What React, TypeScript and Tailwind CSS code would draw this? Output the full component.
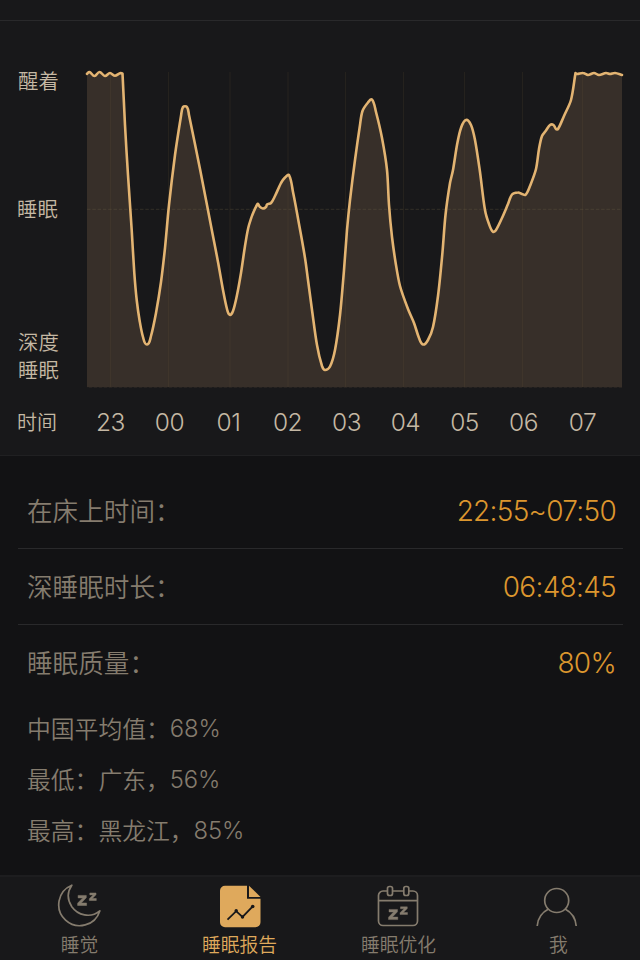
import React from 'react';
import clsx from 'clsx';

type Point = [number, number];

const HOURS = ['23', '00', '01', '02', '03', '04', '05', '06', '07'];
const GRID_X = [110.5, 168.5, 230, 288, 345.5, 403.5, 464.5, 522.5, 582.5];

// repeated points keep a corner sharp
const SLEEP_CURVE: Point[] = [
  [87, 73.8], [89.5, 72], [94.5, 76], [99.5, 72], [105, 76], [110, 73], [115, 75.8], [120, 73.2], [122.5, 73.5], [122.5, 73.5],
  [125, 125], [128, 175], [131.7, 230], [134.3, 273], [136.7, 300], [139.5, 320], [143, 337], [147, 344.5], [151, 336], [156, 313],
  [161, 282], [165, 248], [169, 205], [175, 155], [181, 116], [183, 107], [187, 107], [189, 115], [200, 169], [212, 231],
  [218, 262], [223, 290], [227, 309], [229.7, 314.8], [233, 311], [237, 295], [241, 273], [245, 246], [249, 225], [257.5, 204],
  [260, 207], [263, 208.5], [266, 207], [267, 204.5], [271, 203], [275, 196], [281, 183], [285, 177.5], [289, 175], [293, 192],
  [299, 224], [305, 258], [308, 280], [312, 310], [317, 345], [322, 366], [325, 370], [330, 366.5], [335, 350], [340, 315],
  [344, 270], [347, 230], [350, 200], [355, 160], [360, 125], [362.5, 111], [368, 102.5], [372, 99.5], [376, 112], [382, 138],
  [387, 170], [389, 205], [392, 237], [395.5, 262], [400, 286], [408, 309], [414, 323], [419, 338], [423, 344.5], [428, 340],
  [433, 327], [438, 296], [442.5, 252], [445.5, 215], [450, 183], [453, 170], [457, 145], [461, 128], [466, 120], [471, 125],
  [475, 140], [480, 172], [485, 210], [489, 224], [493, 231.8], [496, 230], [502, 218], [508, 204], [512, 194.5], [518, 192.5],
  [522, 194], [525.5, 194.8], [530, 186], [536, 169], [539, 149], [542, 136], [546, 130.5], [550, 125], [553.5, 125], [556, 129],
  [558, 129], [564, 116], [571, 100], [575.5, 73], [575.5, 73], [577, 74], [583, 73], [588, 75], [594, 73], [599, 75],
  [606, 73], [610, 74], [615, 73], [622, 75],
];

const smoothPath = (pts: Point[]) => {
  let d = `M${pts[0][0]} ${pts[0][1]}`;
  for (let i = 0; i < pts.length - 1; i++) {
    const p0 = pts[i - 1] || pts[i];
    const p1 = pts[i];
    const p2 = pts[i + 1];
    const p3 = pts[i + 2] || p2;
    // limit the handles so that uneven spacing does not overshoot
    const len = Math.hypot(p2[0] - p1[0], p2[1] - p1[1]);
    const handle = (a: Point, b: Point) => {
      const dx = b[0] - a[0];
      const dy = b[1] - a[1];
      const l = Math.hypot(dx, dy) || 1;
      return [(dx / l) * len * 0.3, (dy / l) * len * 0.3];
    };
    const h1 = handle(p0, p2);
    const h2 = handle(p1, p3);
    d += `C${(p1[0] + h1[0]).toFixed(1)} ${(p1[1] + h1[1]).toFixed(1)} ${(p2[0] - h2[0]).toFixed(1)} ${(p2[1] - h2[1]).toFixed(1)} ${p2[0]} ${p2[1]}`;
  }
  return d;
};

const SleepChart = () => {
  const line = smoothPath(SLEEP_CURVE);
  return (
    <svg width="540" height="324" viewBox="84 66 540 324" fill="none">
      <path d={`${line}V387.5H87Z`} fill="#372f29" />
      {GRID_X.map((x) => (
        <path key={x} d={`M${x} 72V387`} stroke="#6b5a35" strokeOpacity="0.16" strokeWidth="1.2" />
      ))}
      <path d="M87 209.3H622" stroke="#6f6448" strokeOpacity="0.3" strokeDasharray="3.5 1.8" />
      <path d="M87 387.5H622" stroke="#18181a" strokeOpacity="0.7" strokeDasharray="2 3" />
      <path d={line} stroke="#e3b472" strokeWidth="2.6" strokeLinejoin="round" strokeLinecap="round" />
    </svg>
  );
};

const MoonIcon = () => (
  <svg width="46" height="46" viewBox="0.7 0.3 46 46" fill="none" stroke="currentColor" strokeWidth="1.7" strokeLinejoin="round">
    <path d="M15.5 2.5A21 21 0 1 0 43.5 28.2C34 36 21.5 32.5 15.5 24C11 17 11 9 15.5 2.5Z" />
    <path d="M21.8 12.7H30V15L25 20.3H30.3V22.8H21.3V20.5L26.4 15.2H21.8ZM33.5 10.3H39.7V12L36 15.8H40V17.8H33V16.1L36.8 12.2H33.5Z" fill="currentColor" strokeWidth="0.5" />
  </svg>
);

const ReportIcon = () => (
  <svg width="46" height="46" viewBox="0 0.3 46 46" fill="none">
    <path d="M8 3H30V16H43.5V39.5A5 5 0 0 1 38.5 44.5H8A5 5 0 0 1 3 39.5V8A5 5 0 0 1 8 3Z" fill="currentColor" />
    <path d="M32 3L43.5 14.2H32Z" fill="currentColor" />
    <path d="M10.5 37L19.2 28.5L25.5 34.2L35.5 24" stroke="#18181a" strokeWidth="1.8" />
    <circle cx="19.2" cy="28" r="1.7" fill="#18181a" />
    <circle cx="25.5" cy="34.3" r="1.7" fill="#18181a" />
    <circle cx="35.7" cy="23.8" r="1.8" fill="#18181a" />
  </svg>
);

const CalendarIcon = () => (
  <svg width="46" height="46" viewBox="1 0 46 46" fill="none" stroke="currentColor" strokeWidth="1.7">
    <path d="M12.5 8H8A4.5 4.5 0 0 0 3.5 12.5V38A4.5 4.5 0 0 0 8 42.5H38A4.5 4.5 0 0 0 42.5 38V12.5A4.5 4.5 0 0 0 38 8H34M17.5 8H28.8M3.5 17.7H42.5" />
    <rect x="12.5" y="3.5" width="5" height="9" rx="2" />
    <rect x="28.8" y="3.5" width="5" height="9" rx="2" />
    <path d="M14 26.4H22.5V28.8L17.5 34H22.8V36.6H13.5V34.2L18.5 29H14ZM25.5 23.8H32.3V25.6L28.4 29.5H32.5V31.5H25V29.8L29 25.8H25.5Z" fill="currentColor" strokeWidth="0.4" />
  </svg>
);

const ProfileIcon = () => (
  <svg width="46" height="46" viewBox="2.3 0.5 46 46" fill="none" stroke="currentColor" strokeWidth="1.7">
    <circle cx="23" cy="18" r="12" />
    <path d="M14.8 26.5C8 30 4 36 3.5 43.5M31.4 26.5C38 30 42 36 42.5 43.5" />
  </svg>
);

const STATS = [
  { label: '在床上时间：', value: '22:55~07:50' },
  { label: '深睡眠时长：', value: '06:48:45' },
  { label: '睡眠质量：', value: '80%' },
];

const AVERAGES = [
  { label: '中国平均值：', value: '68%' },
  { label: '最低：广东，', value: '56%' },
  { label: '最高：黑龙江，', value: '85%' },
];

const TABS = [
  { label: '睡觉', Icon: MoonIcon },
  { label: '睡眠报告', Icon: ReportIcon, active: true },
  { label: '睡眠优化', Icon: CalendarIcon, shifted: true },
  { label: '我', Icon: ProfileIcon, shifted: true },
];

export default function App() {
  return (
    <div className="w-[640px] h-[960px] flex flex-col overflow-hidden bg-[#121214] font-['Inter','Noto_Sans_CJK_SC',sans-serif] font-light">
      <section className="h-[456px] shrink-0 bg-[#18181a] border-b border-[#202022] text-[#c5b8a4]">
        <div className="h-[21px] border-b border-[#29292b]" />
        <div className="flex pt-[45px]">
          <div className="w-[66px] ml-[18px] shrink-0 text-[20.4px] leading-[28px] font-[350]">
            <div className="mt-[2px]">醒着</div>
            <div className="mt-[100px] -ml-px">睡眠</div>
            <div className="mt-[105px]">深度<br />睡眠</div>
          </div>
          <SleepChart />
        </div>
        <div className="h-[64px] flex items-center">
          <div className="w-[63px] pt-px pl-[17px] mr-[18px] text-[20px] whitespace-nowrap font-[350]">时间</div>
          {HOURS.map((hour) => (
            <div key={hour} className="w-[59px] text-center text-[24.5px] tracking-[-0.02em]">{hour}</div>
          ))}
        </div>
      </section>

      <main className="flex-1 pt-[17px] pl-[18px] pr-[17px] text-[#857c6e]">
        {STATS.map((item, i) => (
          <div
            key={item.label}
            className={clsx('h-[76px] flex items-center justify-between pl-[9px] pr-[7px]', i < 2 && 'border-b border-[#29292b]')}
          >
            <span className={clsx('text-[25.6px] font-[350]', i < 2 ? 'pt-[4px]' : 'pt-[2px]')}>{item.label}</span>
            <span className="text-[28px] tracking-[-0.025em] text-[#dc962e]">{item.value}</span>
          </div>
        ))}
        <div className="pl-[9px] pt-[2px]">
          {AVERAGES.map((item) => (
            <div key={item.label} className="h-[51px] flex items-center text-[23.8px]">
              <span className="pt-[3px] font-[350]">{item.label}</span>
              <span className="pt-px tracking-[-0.005em]">{item.value}</span>
            </div>
          ))}
        </div>
      </main>

      <nav className="h-[85px] shrink-0 flex bg-[#18181a] border-t-2 border-[#1d1d1f]">
        {TABS.map(({ label, Icon, active, shifted }) => (
          <button
            key={label}
            className={clsx(
              'w-[160px] flex flex-col items-center pt-[6px]',
              shifted ? 'pr-[3px]' : 'pr-px',
              active ? 'text-[#dfa95c]' : 'text-[#857c6e]'
            )}
          >
            <Icon />
            <span className="mt-[3px] text-[18.8px] leading-[28px] font-[350]">{label}</span>
          </button>
        ))}
      </nav>
    </div>
  );
}
